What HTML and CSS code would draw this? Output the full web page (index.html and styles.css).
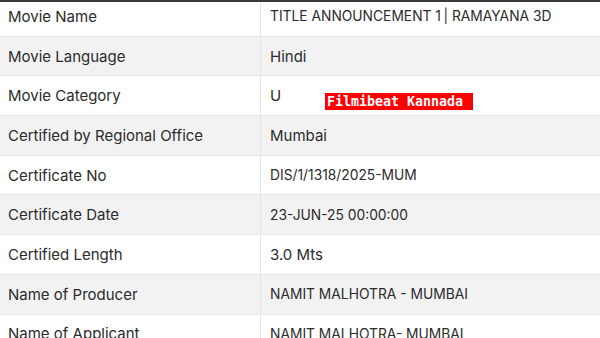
FILE: index.html
```html
<!DOCTYPE html>
<html>
<head lang="en">
    <meta charset="UTF-8">
    <title>Certificate Details</title>
    <link rel="stylesheet" href="styles.css">
</head>
<body>
<div id="wrap">
    <table id="details">
        <tr><td>Movie Name</td><td class="caps">TITLE ANNOUNCEMENT 1&thinsp;| RAMAYANA 3D</td></tr>
        <tr><td>Movie Language</td><td>Hindi</td></tr>
        <tr><td>Movie Category</td><td>U</td></tr>
        <tr><td>Certified by Regional Office</td><td>Mumbai</td></tr>
        <tr><td>Certificate No</td><td class="caps">DIS/1/1318/2025-MUM</td></tr>
        <tr><td>Certificate Date</td><td class="caps">23-JUN-25 00:00:00</td></tr>
        <tr><td>Certified Length</td><td>3.0 Mts</td></tr>
        <tr><td>Name of Producer</td><td class="caps">NAMIT MALHOTRA - MUMBAI</td></tr>
        <tr><td>Name of Applicant</td><td class="caps">NAMIT MALHOTRA- MUMBAI</td></tr>
    </table>
    <span id="mark">Filmibeat Kannada</span>
</div>
</body>
</html>
```

FILE: styles.css
```css
*{
    margin: 0;
    padding: 0;
}
body{
    background: #ffffff;
    font-family: "Inter", "Liberation Sans", sans-serif;
    color: #2b2b2b;
    overflow: hidden;
}
#wrap{
    position: relative;
    border-top: 2px solid #3a3a3a;
    height: 336px;
    overflow: hidden;
}
#details{
    width: 100%;
    border-collapse: collapse;
    margin-top: -5px;
    font-size: 15px;
}
#details td{
    height: 38.7px;
    padding: 0 8px;
    border-bottom: 1px solid #e6e6e8;
    vertical-align: middle;
}
#details td:first-child{
    width: 244px;
    border-right: 1px solid #e6e6e8;
}
#details td:last-child{
    padding-left: 9px;
}
#details td.caps{
    font-size: 13.8px;
}
#details tr:nth-child(even) td{
    background: #f2f2f3;
}
#mark{
    position: absolute;
    left: 325px;
    top: 91px;
    width: 148px;
    height: 17px;
    box-sizing: border-box;
    padding-left: 2px;
    background: #ff0000;
    color: #ffffff;
    font-family: "DejaVu Sans Mono", monospace;
    font-weight: bold;
    font-size: 13.3px;
    line-height: 17px;
}
```
